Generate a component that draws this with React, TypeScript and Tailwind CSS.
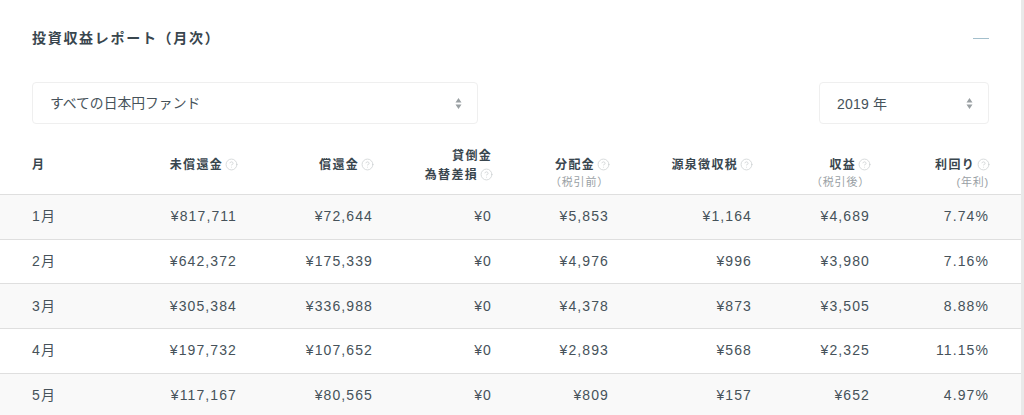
import React from 'react';
import { CircleHelp } from 'lucide-react';

const rows = [
  ['1月', '¥817,711', '¥72,644', '¥0', '¥5,853', '¥1,164', '¥4,689', '7.74%'],
  ['2月', '¥642,372', '¥175,339', '¥0', '¥4,976', '¥996', '¥3,980', '7.16%'],
  ['3月', '¥305,384', '¥336,988', '¥0', '¥4,378', '¥873', '¥3,505', '8.88%'],
  ['4月', '¥197,732', '¥107,652', '¥0', '¥2,893', '¥568', '¥2,325', '11.15%'],
  ['5月', '¥117,167', '¥80,565', '¥0', '¥809', '¥157', '¥652', '4.97%'],
];

const gridCols = 'grid grid-cols-[205px_136px_119px_117px_143px_118px_119px]';

const Help = () => <CircleHelp className="-mr-px ml-[2px] inline-block h-[13px] w-[13px] align-[-2px] text-[#ccd0d1]" strokeWidth={1.4} />;

const Arrows = () => (
  <svg width="7" height="11" viewBox="0 0 7 11" className="text-[#9aa0a3]">
    <path d="M3.5 0L6.5 4.5H.5z M3.5 11L.5 6.5H6.5z" fill="currentColor" />
  </svg>
);

const Select: React.FC<{ label: string; className: string }> = ({ label, className }) => (
  <div className={`flex h-[42px] items-center justify-between rounded-[4px] border border-[#efefef] bg-white pl-[17px] pr-[15px] text-[#46525a] ${className}`}>
    <span className="pt-[2px]">{label}</span>
    <Arrows />
  </div>
);

const HeadCell: React.FC<{ title: string; top?: string; sub?: string }> = ({ title, top, sub }) => (
  <div className={`relative flex h-full flex-col items-end justify-center text-right ${top ? 'pt-[14px]' : 'pt-[12px]'}`}>
    {top && <div className="leading-[19px]">{top}</div>}
    <div className={top ? 'leading-[19px]' : 'leading-[20px]'}>{title}<Help /></div>
    {sub && <div className="absolute right-0 top-[48px] text-[11px] font-normal leading-[20px] tracking-[0.8px] text-[#9aa1a5]">{sub}</div>}
  </div>
);

export default function App() {
  return (
    <div className="h-[415px] w-[1024px] overflow-hidden border-r-[3px] border-[#e9e9e9] bg-white text-[#39464e] [font-family:'Liberation_Sans','Noto_Sans_CJK_JP',sans-serif]">
      <div className="flex h-[82px] items-start justify-between pl-[32px] pr-[32px] pt-[28px]">
        <h2 className="text-[14px] font-bold leading-[20px] tracking-[1.7px]">投資収益レポート（月次）</h2>
        <div className="mt-[10px] h-px w-[16px] bg-[#a3bfcc]" />
      </div>
      <div className="flex justify-between pl-[32px] pr-[32px]">
        <Select label="すべての日本円ファンド" className="w-[446px] text-[13.8px]" />
        <Select label="2019 年" className="w-[170px] text-[14px] tracking-[0.2px]" />
      </div>
      <div className={`${gridCols} h-[71px] items-center border-b border-[#dfdfdf] pl-[32px] pr-[32px] text-[12px] font-bold tracking-[1.3px]`}>
        <div className="relative flex h-full items-center justify-between pt-[12px]">
          <span>月</span>
          <span>未償還金<Help /></span>
        </div>
        <HeadCell title="償還金" />
        <HeadCell title="為替差損" top="貸倒金" />
        <HeadCell title="分配金" sub="（税引前）" />
        <HeadCell title="源泉徴収税" />
        <HeadCell title="収益" sub="（税引後）" />
        <HeadCell title="利回り" sub="(年利)" />
      </div>
      {rows.map((row, i) => (
        <div
          key={row[0]}
          className={`${gridCols} h-[44.67px] items-center border-b border-[#dfdfdf] pl-[32px] pr-[32px] text-[14px] tracking-[1.1px] text-[#46525a] ${i % 2 === 0 ? 'bg-[#f9f9f9]' : 'bg-white'}`}
        >
          <div className="flex justify-between">
            <span>{row[0]}</span>
            <span>{row[1]}</span>
          </div>
          {row.slice(2).map((cell, j) => (
            <div key={j} className="text-right">{cell}</div>
          ))}
        </div>
      ))}
    </div>
  );
}
